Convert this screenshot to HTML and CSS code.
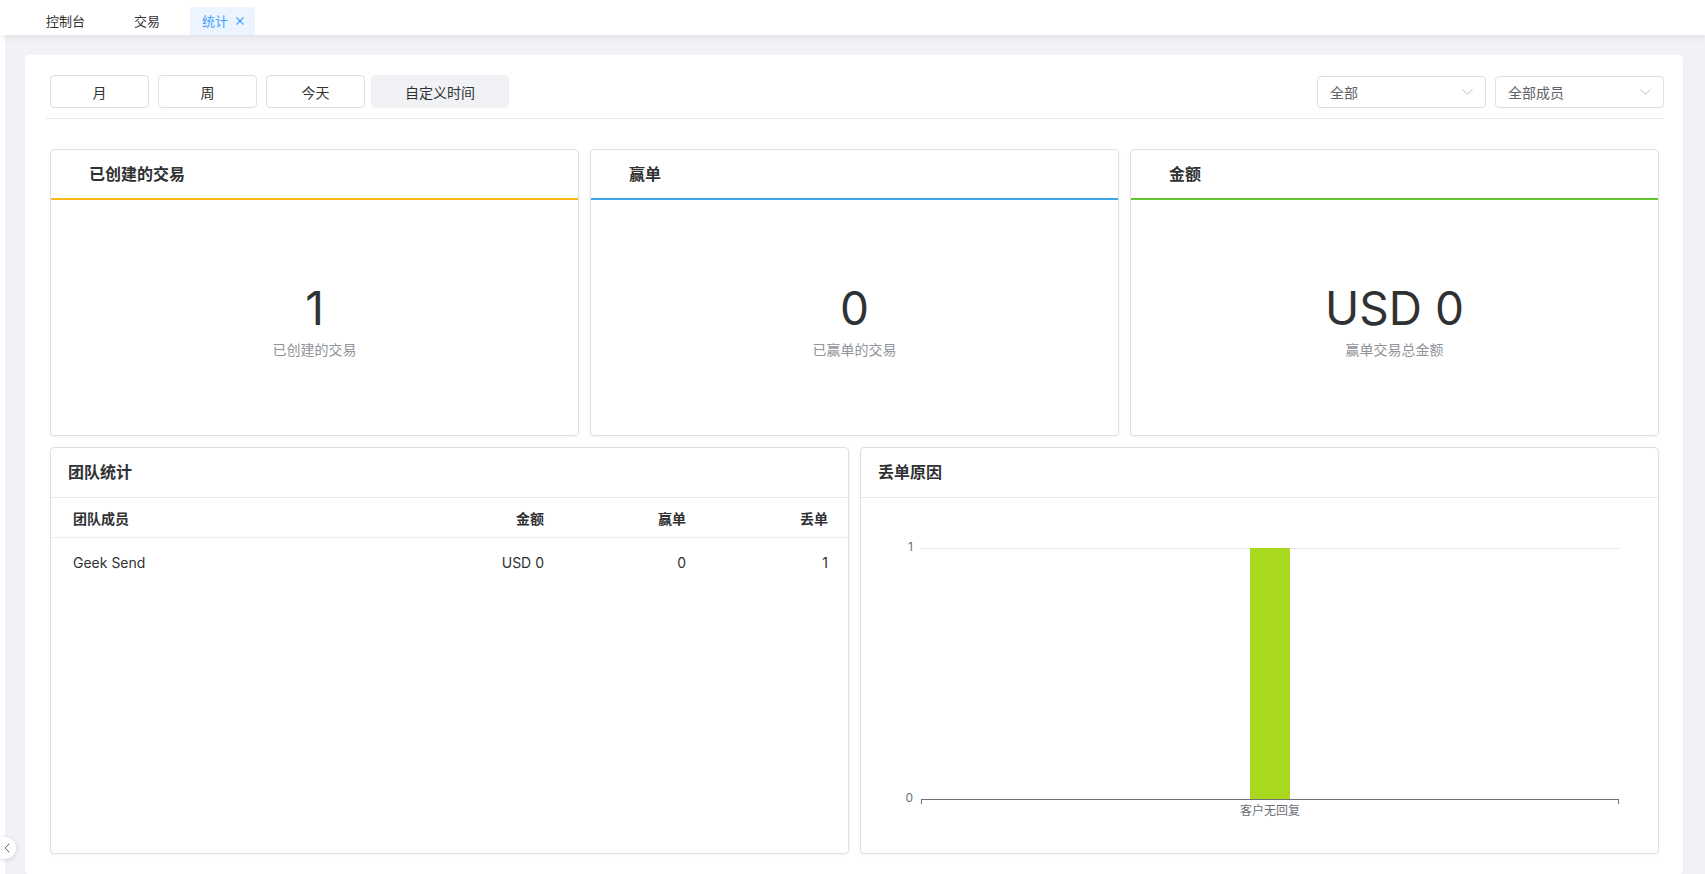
FILE: index.html
```html
<!DOCTYPE html>
<html lang="zh-CN">
<head>
  <meta charset="UTF-8" />
  <meta name="viewport" content="width=device-width, initial-scale=1.0" />
  <title>统计</title>
  <link rel="stylesheet" href="styles.css">
</head>
<body>
  <div class="tabs">
    <div class="tab">控制台</div>
    <div class="tab">交易</div>
    <div class="tab active">统计
      <svg class="close" width="8" height="8" viewBox="0 0 8 8"><path d="M0.5 0.5L7.5 7.5M7.5 0.5L0.5 7.5" stroke="currentColor" stroke-width="1.1" fill="none"/></svg>
    </div>
  </div>

  <div class="main">
    <div class="panel">
      <div class="toolbar">
        <div class="ranges">
          <button class="range">月</button>
          <button class="range">周</button>
          <button class="range">今天</button>
          <button class="range active">自定义时间</button>
        </div>
        <div class="filters">
          <div class="select"><span>全部</span>
            <svg width="11" height="6" viewBox="0 0 11 6"><path d="M0.5 0.5L5.5 5.2L10.5 0.5" stroke="#b8bcc4" stroke-width="1" fill="none"/></svg>
          </div>
          <div class="select"><span>全部成员</span>
            <svg width="11" height="6" viewBox="0 0 11 6"><path d="M0.5 0.5L5.5 5.2L10.5 0.5" stroke="#b8bcc4" stroke-width="1" fill="none"/></svg>
          </div>
        </div>
      </div>

      <div class="stats">
        <div class="stat-card">
          <div class="stat-head yellow">已创建的交易</div>
          <div class="stat-body">
            <div class="stat-num">1</div>
            <div class="stat-sub">已创建的交易</div>
          </div>
        </div>
        <div class="stat-card">
          <div class="stat-head blue">赢单</div>
          <div class="stat-body">
            <div class="stat-num">0</div>
            <div class="stat-sub">已赢单的交易</div>
          </div>
        </div>
        <div class="stat-card">
          <div class="stat-head green">金额</div>
          <div class="stat-body">
            <div class="stat-num">USD 0</div>
            <div class="stat-sub">赢单交易总金额</div>
          </div>
        </div>
      </div>

      <div class="bottom">
        <div class="box">
          <div class="box-head">团队统计</div>
          <div class="row head-row">
            <div>团队成员</div>
            <div class="num">金额</div>
            <div class="num">赢单</div>
            <div class="num">丢单</div>
          </div>
          <div class="row">
            <div>Geek Send</div>
            <div class="num">USD 0</div>
            <div class="num">0</div>
            <div class="num">1</div>
          </div>
        </div>
        <div class="box">
          <div class="box-head">丢单原因</div>
          <svg class="chart" width="797" height="357" viewBox="0 0 797 357">
            <line x1="60" y1="50.5" x2="758" y2="50.5" stroke="#e0e6f1" />
            <rect x="389" y="50" width="40" height="251" fill="#a9d91f" />
            <line x1="60" y1="301.5" x2="758" y2="301.5" stroke="#6e7079" />
            <line x1="60.5" y1="301" x2="60.5" y2="306" stroke="#6e7079" />
            <line x1="757.5" y1="301" x2="757.5" y2="306" stroke="#6e7079" />
            <text class="tick" x="52" y="52.5" text-anchor="end">1</text>
            <text class="tick" x="52" y="303.5" text-anchor="end">0</text>
            <text class="tick" x="409" y="317" text-anchor="middle">客户无回复</text>
          </svg>
        </div>
      </div>
    </div>
  </div>

  <div class="collapse">
    <svg width="6" height="10" viewBox="0 0 6 10"><path d="M5.5 0.5L1 5L5.5 9.5" stroke="#606266" stroke-width="1" fill="none"/></svg>
  </div>
</body>
</html>
```

FILE: styles.css
```css
body {
  font-family: Inter, "Noto Sans CJK SC", sans-serif;
  margin: 0;
  padding: 0;
  background: #fff;
  color: #303133;
  overflow: hidden;
}
.tabs {
  height: 35px;
  display: flex;
  align-items: flex-end;
  padding-left: 34px;
  background: #fff;
  position: relative;
  z-index: 1;
  box-shadow: 0 2px 8px rgba(0, 0, 0, 0.07);
}
.tab {
  height: 28px;
  line-height: 28px;
  padding: 0 12px;
  margin-right: 25px;
  font-size: 13px;
  color: #303133;
}
.tab.active {
  display: flex;
  align-items: center;
  gap: 8px;
  margin-left: -7px;
  padding: 0 11px 0 12px;
  background: #ecf5ff;
  color: #409eff;
  border-radius: 3px 3px 0 0;
}
.main {
  margin-left: 5px;
  background: #f0f2f5;
  padding: 20px 22px 0 20px;
  height: calc(100vh - 35px);
  box-sizing: border-box;
}
.panel {
  background: #fff;
  border-radius: 4px;
  padding: 0 19px 0 21px;
  height: 100%;
  box-sizing: border-box;
}
.toolbar {
  display: flex;
  justify-content: space-between;
  align-items: center;
  padding: 20px 0 10px 4px;
  border-bottom: 1px solid #e4e7ed;
}
.ranges {
  display: flex;
}
.range {
  width: 99px;
  height: 33px;
  margin-right: 9px;
  border: 1px solid #dcdfe6;
  border-radius: 4px;
  background: #fff;
  font-family: inherit;
  font-size: 14px;
  color: #303133;
  box-sizing: border-box;
}
.range.active {
  width: 138px;
  margin-left: -3px;
  background: #f0f2f5;
  border-color: #f0f2f5;
}
.filters {
  display: flex;
}
.select {
  width: 169px;
  height: 32px;
  margin-left: 9px;
  padding: 0 12px;
  display: flex;
  align-items: center;
  justify-content: space-between;
  border: 1px solid #dcdfe6;
  border-radius: 4px;
  box-sizing: border-box;
  font-size: 14px;
  color: #606266;
}
.stats {
  display: grid;
  grid-template-columns: repeat(3, 1fr);
  gap: 11px;
  margin: 30px 5px 0 4px;
}
.stat-card {
  height: 287px;
  display: flex;
  flex-direction: column;
  border: 1px solid #dcdfe6;
  border-radius: 4px;
  box-shadow: 0 1px 3px rgba(0, 0, 0, 0.05);
  box-sizing: border-box;
}
.stat-head {
  height: 48px;
  line-height: 48px;
  padding-left: 38px;
  font-size: 16px;
  font-weight: 700;
  border-bottom: 2px solid;
}
.yellow { border-bottom-color: #f8b619; }
.blue { border-bottom-color: #40a5e8; }
.green { border-bottom-color: #68c433; }
.stat-body {
  flex: 1;
  display: flex;
  flex-direction: column;
  align-items: center;
  justify-content: center;
  padding-top: 6px;
}
.stat-num {
  font-size: 46px;
  line-height: 54px;
  color: #303133;
}
.stat-sub {
  margin-top: 5px;
  font-size: 14px;
  line-height: 20px;
  color: #909399;
}
.bottom {
  display: grid;
  grid-template-columns: 1fr 1fr;
  gap: 11px;
  margin: 11px 5px 0 4px;
}
.box {
  height: 407px;
  border: 1px solid #dcdfe6;
  border-radius: 4px;
  box-shadow: 0 1px 3px rgba(0, 0, 0, 0.05);
  box-sizing: border-box;
  overflow: hidden;
}
.box-head {
  height: 49px;
  line-height: 49px;
  padding-left: 17px;
  font-size: 16px;
  font-weight: 700;
  border-bottom: 1px solid #e4e7ed;
}
.row {
  display: grid;
  grid-template-columns: 1fr 130px 142px 142px;
  align-items: center;
  height: 48px;
  padding: 0 20px 0 22px;
  font-size: 14px;
  color: #303133;
}
.head-row {
  height: 39px;
  font-weight: 700;
  border-bottom: 1px solid #ebeef5;
}
.num {
  text-align: right;
}
.chart {
  display: block;
}
.tick {
  font-family: Inter, "Noto Sans CJK SC", sans-serif;
  font-size: 12px;
  fill: #6e7079;
}
.collapse {
  position: fixed;
  left: -6px;
  top: 837px;
  width: 22px;
  height: 22px;
  border-radius: 50%;
  background: #fff;
  box-shadow: 0 1px 4px rgba(0, 0, 0, 0.15);
  display: flex;
  align-items: center;
  justify-content: center;
  padding-left: 4px;
  box-sizing: border-box;
}
```
